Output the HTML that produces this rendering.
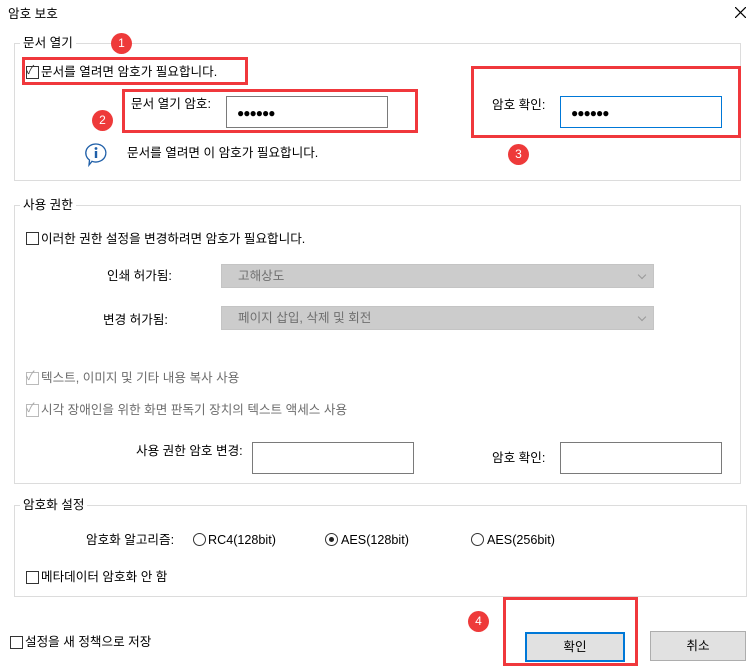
<!DOCTYPE html>
<html><head><meta charset="utf-8"><style>
*{margin:0;padding:0;box-sizing:border-box}
body{width:756px;height:669px;background:#fff;position:relative;overflow:hidden;font-family:"Liberation Sans","Noto Sans CJK KR",sans-serif;font-size:12.6px;color:#000}
.a{position:absolute;white-space:nowrap;line-height:14px}
.g{position:absolute;border:1px solid #dcdcdc}
.lg{position:absolute;background:#fff;padding:0 3px;line-height:14px}
.cb{position:absolute;width:13px;height:13px;border:1px solid #333;background:#fff}
.cb.gr{border-color:#bbb}
.red{position:absolute;border:3px solid #f0383c}
.bd{position:absolute;width:21px;height:21px;border-radius:50%;background:#ee3a3a;color:#fff;font-size:12px;text-align:center;line-height:21px}
.in{position:absolute;border:1px solid #7a7a7a;background:#fff;height:32px;width:162px}
.dd{position:absolute;background:#ccc;border:1px solid #c4c4c4;height:24px;width:433px;color:#707070;padding-left:16px;line-height:22px}
.dd:after{content:"";position:absolute;right:8px;top:7px;width:5px;height:5px;border-right:1px solid #999;border-bottom:1px solid #999;transform:rotate(45deg)}
.rd{position:absolute;width:13px;height:13px;border:1px solid #333;border-radius:50%;background:#fff}
.btn{position:absolute;background:#e1e1e1;border:1px solid #adadad;text-align:center;line-height:28px;height:30px}
.dots{position:absolute;left:10px;top:9px;font-size:12px;letter-spacing:-1px;line-height:14px}
</style></head><body>
<div class="a" style="left:8px;top:7px">암호 보호</div>
<svg style="position:absolute;left:735px;top:7px" width="11" height="11"><path d="M0 0L11 11M11 0L0 11" stroke="#000" stroke-width="1.2"/></svg>

<div class="g" style="left:14px;top:43px;width:727px;height:138px"></div>
<div class="lg" style="left:20px;top:36px">문서 열기</div>
<div class="bd" style="left:111px;top:33px">1</div>
<div class="red" style="left:22px;top:57px;width:226px;height:28px"></div>
<div class="cb" style="left:26px;top:66px"></div>
<div class="a" style="left:26px;top:63px;font-size:12px;color:#333">✓</div>
<div class="a" style="left:41px;top:65px">문서를 열려면 암호가 필요합니다.</div>
<div class="red" style="left:122px;top:89px;width:296px;height:44px"></div>
<div class="a" style="left:131px;top:97px">문서 열기 암호:</div>
<div class="in" style="left:226px;top:96px"><span class="dots">●●●●●●</span></div>
<div class="bd" style="left:92px;top:110px">2</div>
<svg style="position:absolute;left:84px;top:142px" width="24" height="26" viewBox="0 0 24 26"><path d="M12 2a10 9 0 1 1-4 17.3L5 23l.5-5A10 9 0 0 1 12 2z" fill="#fff" stroke="#1f5fa8" stroke-width="1.3"/><circle cx="12" cy="6.5" r="1.4" fill="#1f5fa8"/><rect x="10.8" y="9" width="2.4" height="7" fill="#1f5fa8"/></svg>
<div class="a" style="left:127px;top:146px">문서를 열려면 이 암호가 필요합니다.</div>
<div class="red" style="left:471px;top:66px;width:270px;height:72px"></div>
<div class="a" style="left:492px;top:98px">암호 확인:</div>
<div class="in" style="left:560px;top:96px;border-color:#0078d7"><span class="dots">●●●●●●</span></div>
<div class="bd" style="left:508px;top:144px">3</div>

<div class="g" style="left:14px;top:205px;width:727px;height:279px"></div>
<div class="lg" style="left:20px;top:198px">사용 권한</div>
<div class="cb" style="left:26px;top:232px"></div>
<div class="a" style="left:41px;top:232px">이러한 권한 설정을 변경하려면 암호가 필요합니다.</div>
<div class="a" style="left:107px;top:269px">인쇄 허가됨:</div>
<div class="dd" style="left:221px;top:264px;padding-left:16px">고해상도</div>
<div class="a" style="left:103px;top:313px">변경 허가됨:</div>
<div class="dd" style="left:221px;top:306px">페이지 삽입, 삭제 및 회전</div>
<div class="cb gr" style="left:26px;top:372px"></div><div class="a" style="left:26px;top:369px;color:#aaa">✓</div>
<div class="a" style="left:41px;top:371px;color:#6d6d6d">텍스트, 이미지 및 기타 내용 복사 사용</div>
<div class="cb gr" style="left:26px;top:404px"></div><div class="a" style="left:26px;top:401px;color:#aaa">✓</div>
<div class="a" style="left:41px;top:403px;color:#6d6d6d">시각 장애인을 위한 화면 판독기 장치의 텍스트 액세스 사용</div>
<div class="a" style="left:136px;top:444px">사용 권한 암호 변경:</div>
<div class="in" style="left:252px;top:442px"></div>
<div class="a" style="left:492px;top:451px">암호 확인:</div>
<div class="in" style="left:560px;top:442px"></div>

<div class="g" style="left:14px;top:505px;width:733px;height:92px"></div>
<div class="lg" style="left:20px;top:498px">암호화 설정</div>
<div class="a" style="left:86px;top:533px">암호화 알고리즘:</div>
<div class="rd" style="left:193px;top:533px"></div><div class="a" style="left:208px;top:533px">RC4(128bit)</div>
<div class="rd" style="left:325px;top:533px"></div><div style="position:absolute;left:329px;top:537px;width:5px;height:5px;border-radius:50%;background:#222"></div><div class="a" style="left:341px;top:533px">AES(128bit)</div>
<div class="rd" style="left:471px;top:533px"></div><div class="a" style="left:487px;top:533px">AES(256bit)</div>
<div class="cb" style="left:26px;top:571px"></div>
<div class="a" style="left:41px;top:570px">메타데이터 암호화 안 함</div>

<div class="cb" style="left:10px;top:636px"></div>
<div class="a" style="left:25px;top:635px">설정을 새 정책으로 저장</div>
<div class="bd" style="left:468px;top:611px">4</div>
<div class="red" style="left:503px;top:597px;width:135px;height:69px"></div>
<div class="btn" style="left:525px;top:632px;width:100px;border:2px solid #0078d7;line-height:26px">확인</div>
<div class="btn" style="left:650px;top:631px;width:96px">취소</div>
</body></html>
